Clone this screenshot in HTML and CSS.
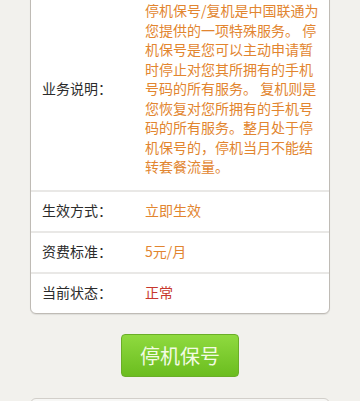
FILE: index.html
```html
<!DOCTYPE html>
<html lang="zh-CN">

<head>
    <meta charset="UTF-8">
    <meta name="viewport" content="width=device-width, initial-scale=1.0">
    <title>停机保号</title>
    <link rel="stylesheet" href="styles.css">
</head>

<body>
    <div class="info-card">
        <div class="info-row">
            <div class="info-label">业务说明：</div>
            <div class="info-value">停机保号/复机是中国联通为您提供的一项特殊服务。 停机保号是您可以主动申请暂时停止对您其所拥有的手机号码的所有服务。 复机则是您恢复对您所拥有的手机号码的所有服务。整月处于停机保号的，停机当月不能结转套餐流量。</div>
        </div>
        <div class="info-row">
            <div class="info-label">生效方式：</div>
            <div class="info-value">立即生效</div>
        </div>
        <div class="info-row">
            <div class="info-label">资费标准：</div>
            <div class="info-value">5元/月</div>
        </div>
        <div class="info-row">
            <div class="info-label">当前状态：</div>
            <div class="info-value status">正常</div>
        </div>
    </div>

    <div class="action">
        <button type="button" class="action-btn">停机保号</button>
    </div>

    <!-- next panel, only its top edge is on screen -->
    <div class="info-card tips-card">
        <div class="tips-body"></div>
    </div>
</body>

</html>
```

FILE: styles.css
```css
body {
    margin: 0;
    background: #f2f1ed;
    font-family: "Noto Sans CJK SC", "Noto Sans", sans-serif;
    font-size: 14px;
    color: #333;
}

.info-card {
    margin: -13px 30px 0;
    background: #fff;
    border: 1px solid #bfbbb5;
    border-radius: 6px;
    box-shadow: 0 1px 1px rgba(0, 0, 0, 0.08);
}

.info-row {
    display: flex;
    align-items: center;
    padding: 9px 0 10.5px 11px;
    border-top: 2px solid #e9e8e6;
    line-height: 19.5px;
}

.info-row:first-child {
    border-top: none;
    padding-top: 13px;
    padding-bottom: 13px;
}

.info-label {
    width: 103px;
    flex-shrink: 0;
    color: #2b2b2b;
}

.info-value {
    width: 176px;
    color: #e2852f;
}

.info-value.status {
    color: #c7372d;
}

.action {
    display: flex;
    justify-content: center;
    padding: 20px 0 21px;
}

.action-btn {
    width: 118px;
    height: 43px;
    padding: 0;
    border: 1px solid #6aae27;
    border-radius: 4px;
    background: linear-gradient(#8fda3f, #6bbd1f);
    color: #f3fbe4;
    font-family: "Noto Sans CJK SC", "Noto Sans", sans-serif;
    font-size: 20px;
    cursor: pointer;
}

.tips-card {
    margin-top: 0;
    border-color: #d2cfca;
    background: #f7f7f5;
}

.tips-body {
    height: 40px;
}
```
